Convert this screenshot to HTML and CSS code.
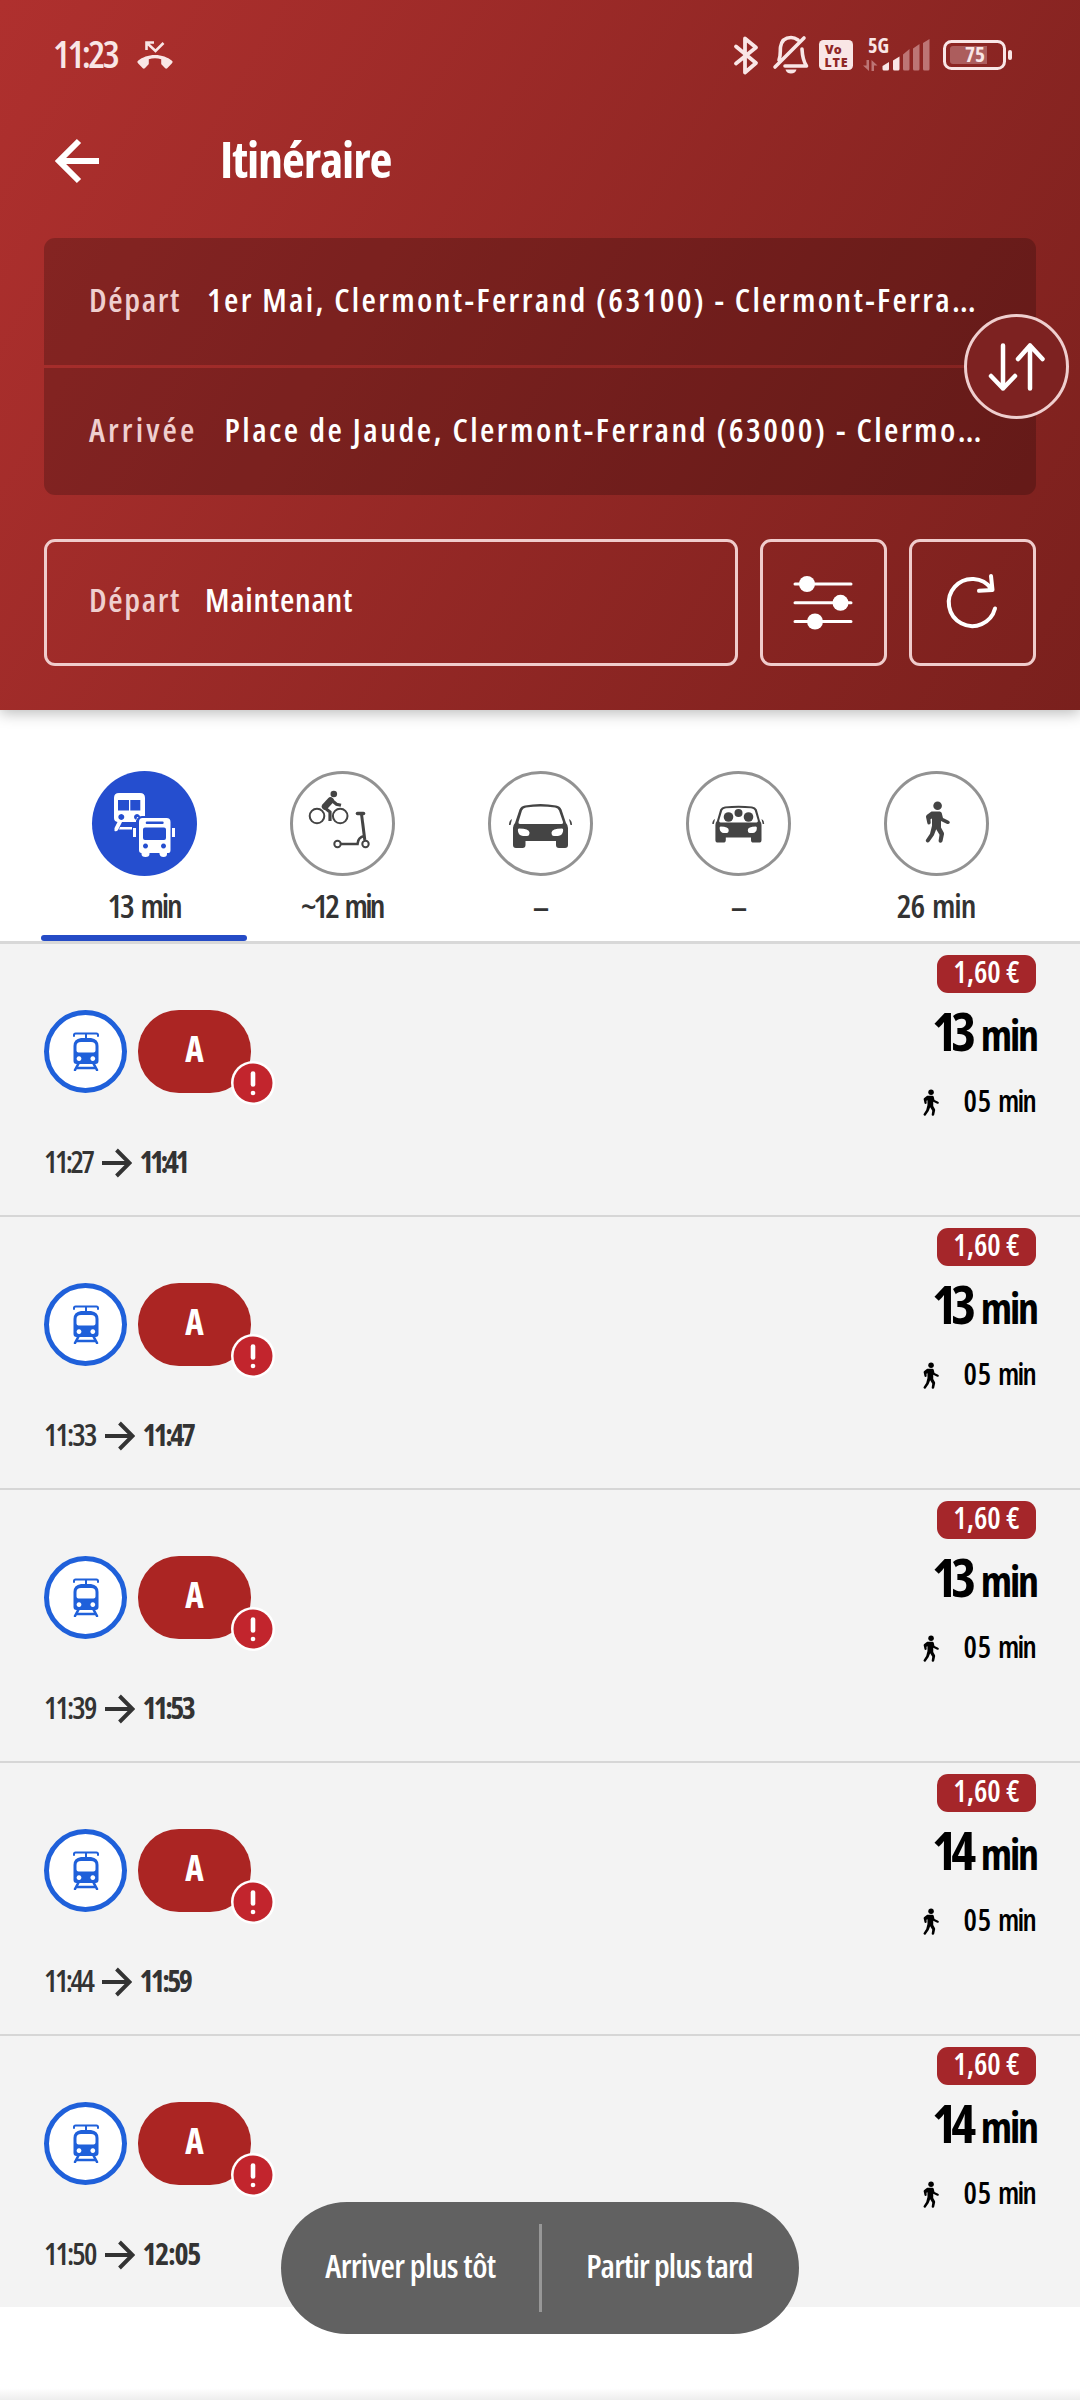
FILE: index.html
```
<!DOCTYPE html>
<html lang="fr">
<head>
<meta charset="utf-8">
<title>Itinéraire</title>
<link rel="stylesheet" href="styles.css">
</head>
<body>
<svg class="defs" aria-hidden="true">
  <symbol id="walker" viewBox="0 0 25 41">
    <circle cx="12.6" cy="4.3" r="4.3"/>
    <path d="M6.5 10h8.2q1.600 0 2 1.600l1.300 5 5.600 2.600q1.800 1 .9 2.600-.8 1.200-2.300.6l-6.200-3v6.600l2.600 4.800q.5 1 .4 2l-1.500 7q-.5 1.600-2.200 1.400-1.800-.3-1.700-1.900l.9-6-3.300-5.500-2.300 6-4.600 6.500q-1 1.300-2.500.5-1.500-1-.8-2.500l4-6 2-8V17l-1.500.8.2 3.400q-.1 1.700-1.700 1.800-1.500 0-1.700-1.600L1 15.500q-.1-1.300 1-2.200z"/>
  </symbol>
  <symbol id="tram" viewBox="0 0 26 39">
    <path d="M1 4V3q0-1.600 1.600-1.600h20.800Q25 1.400 25 3v1M13 1.400V7" fill="none" stroke="currentColor" stroke-width="2" stroke-linecap="round"/>
    <path fill-rule="evenodd" d="M8 6h10q7.500 1 7.500 8v15q0 3-3 3H3.500q-3 0-3-3V14Q.5 7 8 6zM8 10q-4.500 0-4.500 4v4.500q0 2 2 2h15q2 0 2-2V14q0-4-4.500-4zM6 24.200a2.400 2.400 0 1 0 .01 0zM19.800 24.200a2.400 2.400 0 1 0 .01 0z"/>
    <path d="M5.500 31.500 2 38M20.500 31.500 24 38M4 36h18" fill="none" stroke="currentColor" stroke-width="2.600" stroke-linecap="round"/>
  </symbol>
  <symbol id="arrow" viewBox="0 0 30 30">
    <path d="M0 15h27M14.500 2 27.500 15l-13 13" fill="none" stroke="currentColor" stroke-width="3.900"/>
  </symbol>
  <symbol id="alert" viewBox="0 0 44 44">
    <circle cx="22" cy="22" r="22" fill="#fff"/>
    <circle cx="22" cy="22" r="19.500" fill="#c2252d"/>
    <path d="M22 12.500v11" stroke="#fff" stroke-width="4.600" stroke-linecap="round"/>
    <circle cx="22" cy="32" r="2.300" fill="#fff"/>
  </symbol>
</svg>

<header class="header">
  <div class="status">
    <span class="clock">11:23</span>
    <svg class="missed" viewBox="0 0 36 28" width="36" height="28" fill="currentColor">
      <path d="M18 14c-7 0-12.500 2.200-17 5.800-.8.800-.8 1.600 0 2.400l4.800 5c.6.600 1.400.6 2 0l3.400-3.400c.4-.4.600-.8.600-1.400v-4.200c4-1.400 8.400-1.400 12.400 0v4.200c0 .6.200 1 .6 1.400l3.400 3.400c.6.600 1.400.6 2 0l4.800-5c.8-.8.800-1.600 0-2.400C30.500 16.200 25 14 18 14z"/>
      <path d="M9.500 9V1.500H17M10.500 2.500l8 7.500L26.500 2" fill="none" stroke="currentColor" stroke-width="2.600"/>
    </svg>
    <span class="spring"></span>
    <svg class="bt" viewBox="0 0 24 39" width="24" height="39" fill="none" stroke="currentColor" stroke-width="3.800" stroke-linecap="round" stroke-linejoin="round">
      <path d="M2 10.500 22 27 11 36.500V2.500L22 11.500 2 27.500"/>
    </svg>
    <svg class="bell" viewBox="0 0 36 40" width="36" height="40" fill="none" stroke="currentColor" stroke-width="3.600" stroke-linecap="round" stroke-linejoin="round">
      <path d="M2 32 31 3M6 25c2-5 1-9 1.500-13C8.500 6 12 2.500 18 2.500c3 0 5 1 7 2.500M29 14c.3 6 .5 11 4.500 17H12"/>
      <path d="M12.500 34.500h11q-1 4-5.500 4t-5.500-4z" fill="currentColor" stroke="none"/>
    </svg>
    <svg class="volte" viewBox="0 0 34 30" width="34" height="30">
      <rect width="34" height="30" rx="4.500" fill="#f9e6e6"/>
      <text x="6" y="14" class="volte-text">Vo</text>
      <text x="5.500" y="26.500" class="volte-text" textLength="23">LTE</text>
    </svg>
    <svg class="signal" viewBox="0 0 68 36" width="68" height="36">
      <text x="6" y="16" class="net-text" textLength="21" lengthAdjust="spacingAndGlyphs">5G</text>
      <g fill="#bd7575">
        <path d="M4.500 23H7v11L1 28.500h3.500zM9.500 34V23l6 5.500H12V34z"/>
        <path d="M41 17.500 47.500 12v20q0 1.500-1.500 1.500h-3.500Q41 33.500 41 32zM51 11.500 57.500 7v25q0 1.500-1.500 1.500h-3.500Q51 33.500 51 32zM61 6 67.500 2v30q0 1.500-1.500 1.500h-3.500Q61 33.500 61 32z"/>
      </g>
      <path fill="#f9e6e6" d="M20.500 29 27 25v7q0 1.500-1.500 1.500H22q-1.500 0-1.500-1.500zM31 23.500l6.500-4V32q0 1.500-1.500 1.500h-3.500Q31 33.500 31 32z"/>
    </svg>
    <svg class="battery" viewBox="0 0 70 30" width="70" height="30">
      <rect x="1.500" y="1.500" width="60" height="27" rx="7" fill="none" stroke="#f9e6e6" stroke-width="3"/>
      <path d="M44 6v18H10q-3 0-3-3V9q0-3 3-3z" fill="#ac5d5d"/>
      <rect x="65" y="10" width="4" height="10" rx="2" fill="#f9e6e6"/>
      <text x="22" y="21.500" class="batt-text" textLength="20" lengthAdjust="spacingAndGlyphs">75</text>
    </svg>
  </div>

  <div class="titlebar">
    <svg class="back" viewBox="0 0 44 44" width="44" height="44" fill="none" stroke="#fff" stroke-width="6">
      <path d="M44 22H4M24 2 4 22l20 20"/>
    </svg>
    <h1 class="title">Itinéraire</h1>
  </div>

  <div class="stops">
    <div class="stop stop--from"><span class="hint">Départ</span><span class="value">1er Mai, Clermont-Ferrand (63100) - Clermont-Ferra…</span></div>
    <div class="stop stop--to"><span class="hint">Arrivée</span><span class="value">Place de Jaude, Clermont-Ferrand (63000) - Clermo…</span></div>
    <button class="swap" aria-label="Inverser">
      <svg viewBox="0 0 57 48" width="57" height="48" fill="none" stroke="#fff" stroke-width="4.500" stroke-linecap="round" stroke-linejoin="round">
        <path d="M15 2.500v43M3 33l12 12.500L27 33M42 45.500v-43M30 16 42 2.500 54.500 16"/>
      </svg>
    </button>
  </div>

  <div class="controls">
    <div class="when"><span class="hint">Départ</span><span class="value">Maintenant</span></div>
    <button class="tool" aria-label="Options">
      <svg viewBox="0 0 60 54" width="60" height="54" fill="#fff" stroke="#fff" stroke-width="3" stroke-linecap="round">
        <path d="M2 8h56M2 26.800h56M2 45.500h56"/>
        <g stroke="none"><circle cx="14" cy="8" r="8"/><circle cx="47.500" cy="26.800" r="8"/><circle cx="22" cy="45.500" r="8"/></g>
      </svg>
    </button>
    <button class="tool" aria-label="Actualiser">
      <svg viewBox="0 0 54 56" width="54" height="56" fill="none" stroke="#fff" stroke-width="4" stroke-linecap="round" stroke-linejoin="round">
        <path d="M50 33.500A23.500 23.500 0 1 1 46.500 14M46 1l1.500 14L34 15.800"/>
      </svg>
    </button>
  </div>
</header>

<nav class="tabs">
  <div class="tab tab--active">
    <svg class="mode" viewBox="0 0 105 105" width="105" height="105">
      <circle cx="52.500" cy="52.500" r="52.500" fill="#254ecf"/>
      <path fill="#fff" fill-rule="evenodd" d="M27 22h21q5 0 5 5v19h-8l-1 5H30l-4 8q-1.500 2-3.500 1v-3l3-6q-3.500-.5-3.500-4V27q0-5 5-5zM26 29v10.500h11V29zM38.300 29v10.500h10V29zM29.300 43a3 3 0 1 0 .01 0zM45 43a3 3 0 1 0 .01 0z"/>
      <path fill="#fff" d="M28 56h12v2.600H27z"/>
      <path fill="#254ecf" d="M44 53q0-8 6-8h6v8z"/>
      <path fill="#fff" fill-rule="evenodd" d="M50.500 47h24q4 0 4 4v28q0 3-2 3h-1.500v1q0 3-3.500 3t-4-3v-1h-10v1q0 3-4 3t-4-3v-1q-2.500 0-2.500-3V51q0-4 3.500-4zM55 50.500q-1.300 0-1.300 1.300T55 53h15.500q1.200 0 1.200-1.200t-1.200-1.300zM53 56.500q-2 0-2 2V67q0 2 2 2h19q2 0 2-2v-8.500q0-2-2-2zM53.500 72.600a2.500 2.500 0 1 0 .01 0zM71.500 72.600a2.500 2.500 0 1 0 .01 0z"/>
      <path fill="#fff" d="M41 57h3v9h-3zM80 57h3v9h-3z"/>
    </svg>
    <span class="label">13 min</span>
  </div>
  <div class="tab">
    <svg class="mode" viewBox="0 0 105 105" width="105" height="105">
      <circle class="ring" cx="52.500" cy="52.500" r="51"/>
      <g fill="none" stroke="#444" stroke-width="2">
        <circle cx="27" cy="45" r="7.300"/><circle cx="50.200" cy="45" r="7.300"/>
        <path d="M40.500 29.500 35 35.500" stroke-width="6.500" stroke-linecap="round"/>
        <path d="M35 37l5 4v9M42 29.500l4.500 3.700 4.500 1" stroke-width="3.200"/>
        <circle cx="47.500" cy="73" r="3.200"/><circle cx="75.500" cy="73" r="3.200"/>
        <path d="M51 73h16.500q.5-7 7-8" stroke-width="2.600"/>
        <path d="M71.500 43l3.300 26" stroke-width="3"/>
        <path d="M67.500 42.500h6" stroke-width="3.600" stroke-linecap="round"/>
      </g>
      <circle cx="43.800" cy="23" r="3.300" fill="#444"/>
    </svg>
    <span class="label label--approx">~12 min</span>
  </div>
  <div class="tab">
    <svg class="mode" viewBox="0 0 105 105" width="105" height="105">
      <circle class="ring" cx="52.500" cy="52.500" r="51"/>
      <path fill="#444" fill-rule="evenodd" d="M37 34.500q15.500-3 31 0 4 .7 5.500 4L78 52q2 2 2 5v17q0 3-3 3h-6q-3 0-3-3v-4H37.500v4q0 3-3 3H28q-3 0-3-3V57q0-3 2-5l4.500-13.500q1.500-3.300 5.500-4zM38 36.500q-3 .5-4 3L30.500 51q-.5 2 1.500 2h41.500q2 0 1.500-2l-4-11.500q-1-2.500-4-3-14.500-2-29 0zM31 57.500q-1.500 0-1 3 .8 4 5 4.500h4q2.500 0 2.500-3.500-.5-4-10.500-4zM74 57.500q1.500 0 1 3-.8 4-5 4.500h-4q-2.500 0-2.500-3.500.5-4 10.500-4z"/>
      <path d="M24 48q-3 1.500-3 6h1.500zM81 48q3 1.500 3 6h-1.500z" fill="#444"/>
    </svg>
    <span class="label">–</span>
  </div>
  <div class="tab">
    <svg class="mode" viewBox="0 0 105 105" width="105" height="105">
      <circle class="ring" cx="52.500" cy="52.500" r="51"/>
      <path fill="#444" fill-rule="evenodd" d="M39 35.500q13.500-1.500 27 0 3.500.4 4.800 3L74 50q1.500 1.500 1.500 4v15q0 2.600-2.600 2.600h-5.500Q65 71.600 65 69v-2.500H39.800V69q0 2.600-2.600 2.600H32q-2.600 0-2.600-2.600V54q0-2.500 1.500-4l3.300-11.500q1.300-2.600 4.800-3zM40 37.200q-3 .3-3.800 2.300l-3 10q-.4 2 1.300 2h36q1.700 0 1.300-2l-3-10q-.8-2-3.800-2.300-12.500-1-25 0zM34.500 55.500q-1.200 0-.8 2.500.6 3.700 4 4h3q2 0 2-3 0-3.500-8.200-3.500zM70 55.500q1.200 0 .8 2.500-.6 3.700-4 4h-3q-2 0-2-3 0-3.500 8.200-3.500z"/>
      <path d="M29 48q-2.700 1.300-2.700 5h1.500zM75.500 48q2.700 1.300 2.700 5h-1.500z" fill="#444"/>
      <g fill="#444"><circle cx="42.500" cy="46" r="4.800"/><circle cx="52.500" cy="42" r="4"/><circle cx="62.500" cy="46" r="4.800"/></g>
    </svg>
    <span class="label">–</span>
  </div>
  <div class="tab">
    <svg class="mode" viewBox="0 0 105 105" width="105" height="105">
      <circle class="ring" cx="52.500" cy="52.500" r="51"/>
      <use href="#walker" x="41" y="30" width="25" height="42" fill="#444"/>
    </svg>
    <span class="label label--walk">26 min</span>
  </div>
</nav>

<main class="trips">
  <article class="trip">
    <div class="lines"><span class="vehicle"><svg width="26" height="39"><use href="#tram"/></svg></span><span class="line">A<svg class="alert" width="44" height="44"><use href="#alert"/></svg></span></div>
    <div class="hours"><span class="dep">11:27</span><svg class="to" width="30" height="30"><use href="#arrow"/></svg><b class="arr arr--narrow">11:41</b></div>
    <div class="facts"><span class="fare">1,60 €</span><span class="total"><b>13</b><i>min</i></span><span class="walk"><svg width="16" height="27"><use href="#walker"/></svg><b>05</b><i>min</i></span></div>
  </article>
  <article class="trip">
    <div class="lines"><span class="vehicle"><svg width="26" height="39"><use href="#tram"/></svg></span><span class="line">A<svg class="alert" width="44" height="44"><use href="#alert"/></svg></span></div>
    <div class="hours"><span class="dep dep--wide">11:33</span><svg class="to" width="30" height="30"><use href="#arrow"/></svg><b class="arr">11:47</b></div>
    <div class="facts"><span class="fare">1,60 €</span><span class="total"><b>13</b><i>min</i></span><span class="walk"><svg width="16" height="27"><use href="#walker"/></svg><b>05</b><i>min</i></span></div>
  </article>
  <article class="trip">
    <div class="lines"><span class="vehicle"><svg width="26" height="39"><use href="#tram"/></svg></span><span class="line">A<svg class="alert" width="44" height="44"><use href="#alert"/></svg></span></div>
    <div class="hours"><span class="dep dep--wide">11:39</span><svg class="to" width="30" height="30"><use href="#arrow"/></svg><b class="arr">11:53</b></div>
    <div class="facts"><span class="fare">1,60 €</span><span class="total"><b>13</b><i>min</i></span><span class="walk"><svg width="16" height="27"><use href="#walker"/></svg><b>05</b><i>min</i></span></div>
  </article>
  <article class="trip">
    <div class="lines"><span class="vehicle"><svg width="26" height="39"><use href="#tram"/></svg></span><span class="line">A<svg class="alert" width="44" height="44"><use href="#alert"/></svg></span></div>
    <div class="hours"><span class="dep">11:44</span><svg class="to" width="30" height="30"><use href="#arrow"/></svg><b class="arr">11:59</b></div>
    <div class="facts"><span class="fare">1,60 €</span><span class="total"><b>14</b><i>min</i></span><span class="walk"><svg width="16" height="27"><use href="#walker"/></svg><b>05</b><i>min</i></span></div>
  </article>
  <article class="trip">
    <div class="lines"><span class="vehicle"><svg width="26" height="39"><use href="#tram"/></svg></span><span class="line">A<svg class="alert" width="44" height="44"><use href="#alert"/></svg></span></div>
    <div class="hours"><span class="dep dep--wide">11:50</span><svg class="to" width="30" height="30"><use href="#arrow"/></svg><b class="arr arr--wide">12:05</b></div>
    <div class="facts"><span class="fare">1,60 €</span><span class="total"><b>14</b><i>min</i></span><span class="walk"><svg width="16" height="27"><use href="#walker"/></svg><b>05</b><i>min</i></span></div>
  </article>
</main>

<div class="shift">
  <span class="shift-item shift-item--earlier">Arriver plus tôt</span>
  <span class="shift-item shift-item--later">Partir plus tard</span>
</div>
<div class="footer-shade"></div>
</body>
</html>
```
FILE: styles.css
```
* { box-sizing: border-box; }
body {
  margin: 0;
  width: 1080px;
  height: 2400px;
  position: relative;
  overflow: hidden;
  background: #fff;
  font-family: "Open Sans", "Liberation Sans", sans-serif;
  font-stretch: condensed;
  font-weight: 600;
  color: #333;
  display: flex;
  flex-direction: column;
}
svg { display: block; flex: none; overflow: visible; }
span, b, i { white-space: nowrap; }
b { font-weight: 700; }
i { font-style: normal; }
button { padding: 0; font: inherit; background: none; }
.defs { position: absolute; width: 0; height: 0; }

.header {
  height: 710px;
  flex: none;
  padding: 0 44px;
  background: linear-gradient(120deg, #af302e, #7a201d);
  box-shadow: 0 3px 14px rgba(0, 0, 0, .28);
}
.status {
  height: 110px;
  display: flex;
  align-items: center;
  color: #f9e6e6;
  padding: 0 23px 0 9px;
}
.clock {
  font-size: 38px;
  line-height: 44px;
  width: 84px;
  padding-bottom: 4px;
  letter-spacing: -2.6px;
}
.spring { flex: 1; }
.bt { margin-right: 15px; }
.bell { margin-right: 10px; }
.volte { margin-right: 9px; }
.signal { margin-right: 13px; }
.volte-text { font: 800 12.500px "Open Sans", sans-serif; fill: #8f2725; }
.net-text { font: 700 21px "Open Sans", sans-serif; font-stretch: condensed; fill: #f9e6e6; }
.batt-text { font: 700 22px "Open Sans", sans-serif; font-stretch: condensed; fill: #f9e6e6; }

.titlebar {
  height: 128px;
  display: flex;
  align-items: flex-start;
  padding: 29px 0 0 11px;
}
.title {
  margin: -7px 0 0 121px;
  font-size: 50px;
  line-height: 54px;
  font-weight: 700;
  letter-spacing: -1.1px;
  color: #fff;
}

.stops { position: relative; display: grid; gap: 3px; }
.stop {
  height: 127px;
  display: flex;
  align-items: center;
  padding: 0 44px 5px 45px;
  background: rgba(0, 0, 0, .21);
  font-size: 33px;
}
.stop--from { border-radius: 11px 11px 0 0; }
.stop--to { border-radius: 0 0 11px 11px; }
.hint { color: #efcfcf; letter-spacing: 1.6px; margin-right: 26px; }
.value { color: #fff; letter-spacing: 2.35px; }
.stop--to .hint { letter-spacing: 3.1px; margin-right: 27px; }
.stop--to .value { letter-spacing: 2.48px; }
.swap {
  position: absolute;
  right: -33px;
  top: 76px;
  width: 105px;
  height: 105px;
  border: 3px solid #efcfcf;
  border-radius: 50%;
  background: #7d2221;
  display: grid;
  place-items: center;
}

.controls {
  display: grid;
  grid-template-columns: 1fr 127px 127px;
  gap: 22px;
  margin-top: 44px;
}
.when, .tool {
  height: 127px;
  border: 3px solid #f0cccc;
  border-radius: 11px;
  display: flex;
  align-items: center;
}
.when { padding: 0 42px 7px; font-size: 33px; }
.when .hint { margin-right: 24px; }
.when .value { letter-spacing: .7px; }
.tool { justify-content: center; padding-right: 1px; }

.tabs {
  flex: none;
  height: 234px;
  display: grid;
  grid-template-columns: repeat(5, 198px);
  padding: 61px 45px 0;
  border-bottom: 3px solid #d8d8d8;
}
.tab { display: flex; flex-direction: column; align-items: center; }
.tab--active::after {
  content: "";
  width: 206px;
  height: 6px;
  margin-top: 9px;
  border-radius: 3px;
  background: #254bc6;
}
.ring { fill: #fff; stroke: #929292; stroke-width: 3; }
.label { margin-top: 10px; font-size: 33px; line-height: 40px; letter-spacing: -2.2px; word-spacing: 4px; }
.label--approx { letter-spacing: -2.8px; }
.label--walk { letter-spacing: -1.1px; word-spacing: 3px; }

.trips { flex: none; }
.trip {
  height: 273px;
  background: #f3f3f3;
  border-bottom: 2px solid #d6d6d6;
  padding: 0 44px;
  display: grid;
  grid-template-columns: 1fr auto;
  grid-template-rows: 149px 1fr;
}
.trip:last-child { height: 271px; border-bottom: 0; }
.lines { display: flex; gap: 11px; padding-top: 66px; }
.vehicle {
  width: 83px;
  height: 83px;
  border: 5px solid #1f60da;
  border-radius: 50%;
  background: #fff;
  color: #1f60da;
  fill: currentColor;
  display: grid;
  place-items: center;
}
.line {
  position: relative;
  width: 113px;
  height: 83px;
  border-radius: 41px;
  background: #ab2523;
  color: #fff;
  font-size: 35px;
  font-weight: 700;
  line-height: 78px;
  text-align: center;
}
.alert { position: absolute; left: 93px; top: 51px; }
.hours {
  grid-row: 2;
  display: flex;
  align-items: center;
  height: 40px;
  margin-top: 48px;
  font-size: 30px;
}
.dep { letter-spacing: -2.5px; }
.dep--wide { letter-spacing: -1.9px; }
.arr { letter-spacing: -2.7px; }
.arr--narrow { letter-spacing: -3.5px; }
.arr--wide { letter-spacing: -1.3px; }
.to { margin: 3px 7px 0 10px; }
.facts {
  grid-column: 2;
  grid-row: 1 / 3;
  display: flex;
  flex-direction: column;
  align-items: flex-end;
  padding-top: 11px;
  color: #000;
}
.fare {
  width: 99px;
  height: 38px;
  border-radius: 11px;
  background: #a5262a;
  color: #fff;
  font-size: 30px;
  line-height: 34px;
  text-align: center;
}
.total { display: flex; align-items: baseline; height: 60px; line-height: 60px; margin-top: 8px; }
.total b { font-size: 53px; letter-spacing: -5.500px; margin-right: 10px; }
.total i { font-size: 42px; font-weight: 700; letter-spacing: -2.1px; margin-right: -1px; }
.walk { display: flex; align-items: center; height: 34px; line-height: 34px; margin-top: 23px; font-size: 30px; }
.walk svg { margin: 2px 25px 0 0; }
.walk b { font-weight: 600; margin-right: 6px; letter-spacing: .8px; }
.walk i { letter-spacing: -1.8px; margin-right: 1px; }

.shift {
  position: absolute;
  left: 281px;
  top: 2202px;
  width: 518px;
  height: 132px;
  border-radius: 66px;
  background: #616161;
  color: #fff;
  font-size: 33px;
  display: grid;
  grid-template-columns: 1fr 1fr;
  align-items: center;
}
.shift-item { height: 88px; line-height: 84px; text-align: center; }
.shift-item--earlier { letter-spacing: -.6px; }
.shift-item--later { letter-spacing: -.9px; border-left: 3px solid #979797; margin-left: -1px; padding-right: 2px; }
.footer-shade {
  position: absolute;
  left: 0;
  right: 0;
  bottom: 0;
  height: 12px;
  background: linear-gradient(rgba(0, 0, 0, 0), rgba(0, 0, 0, .07));
}
```
